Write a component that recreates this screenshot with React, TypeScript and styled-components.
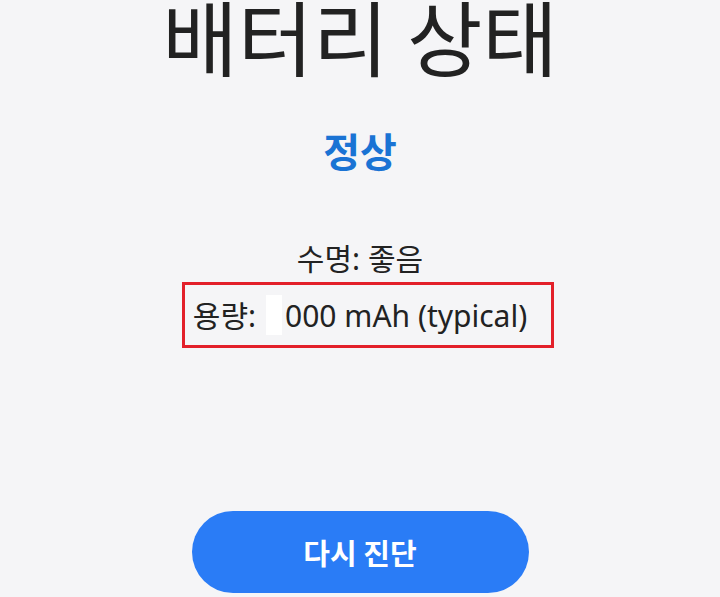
import React from 'react';
import styled, { createGlobalStyle } from 'styled-components';

const GlobalStyle = createGlobalStyle`
  html, body {
    margin: 0;
    padding: 0;
    background: #f5f5f7;
    overflow: hidden;
  }
  body {
    font-family: "Noto Sans CJK KR", "Noto Sans", sans-serif;
  }
`;

const Screen = styled.div`
  width: 720px;
  height: 597px;
  display: flex;
  flex-direction: column;
  align-items: center;
  overflow: hidden;
  color: #222;
`;

const Title = styled.h1`
  margin: -14px 0 0;
  font-size: 82px;
  font-weight: 400;
  line-height: 1.2;
  color: #222;
`;

const Status = styled.div`
  margin-top: 42px;
  font-size: 40px;
  font-weight: 700;
  color: #1a73d4;
  line-height: 1.2;
`;

const InfoList = styled.div`
  margin-top: 65px;
  display: flex;
  flex-direction: column;
  align-items: center;
`;

const InfoRow = styled.div<{ $boxed?: boolean }>`
  font-family: "Noto Sans", "Noto Sans CJK KR", sans-serif;
  font-size: 30px;
  line-height: 39px;
  display: flex;
  align-items: center;
  ${(p) =>
    p.$boxed &&
    `
    margin: 4px 0 0 16px;
    padding: 10px 24px 10px 8px;
    border: 3px solid #e3202a;
  `}
`;

const Redacted = styled.span`
  display: inline-block;
  width: 16px;
  height: 40px;
  background: #fff;
  margin: 0 3px 0 10px;
`;

const Spacer = styled.div`
  flex: 1;
`;

const RetryButton = styled.button`
  width: 337px;
  height: 82px;
  margin-bottom: 4px;
  border: none;
  border-radius: 41px;
  background: #2a7cf6;
  color: #fff;
  font-family: "Noto Sans CJK KR", sans-serif;
  font-size: 29px;
  font-weight: 700;
`;

const App = () => {
  return (
    <Screen>
      <GlobalStyle />
      <Title>배터리 상태</Title>
      <Status>정상</Status>
      <InfoList>
        <InfoRow>수명: 좋음</InfoRow>
        <InfoRow $boxed>
          용량:<Redacted />000 mAh (typical)
        </InfoRow>
      </InfoList>
      <Spacer />
      <RetryButton>다시 진단</RetryButton>
    </Screen>
  );
};

export default App;
